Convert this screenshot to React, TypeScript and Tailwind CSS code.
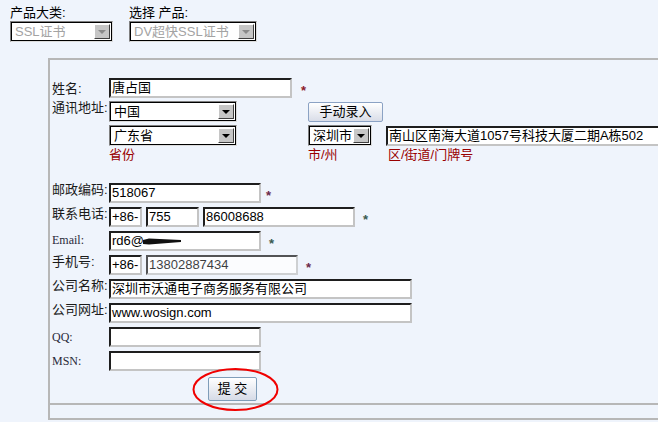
import type { ReactNode } from 'react'

const INPUT =
  'h-[20px] bg-white border-2 border-t-[#1e1e1e] border-l-[#1e1e1e] border-r-[#c4c4c4] border-b-[#c4c4c4] flex items-center pl-[1px] text-[13px] leading-[16px] text-black overflow-hidden whitespace-nowrap'

function Field({ className, children }: { className: string; children?: ReactNode }) {
  return <div className={`${INPUT} ${className}`}>{children}</div>
}

function Select({ className, text, disabled }: { className: string; text: string; disabled?: boolean }) {
  return (
    <div className={`h-[21px] border border-t-[#808080] border-l-[#808080] border-r-[#dcdcdc] border-b-[#dcdcdc] ${className}`}>
      <div className="h-full border border-black bg-white flex items-center">
        <span
          className={`flex-1 pl-[3px] text-[13px] leading-[16px] whitespace-nowrap overflow-hidden ${
            disabled ? 'text-[#a3a3a3]' : 'text-black'
          }`}
        >
          {text}
        </span>
        <div className="w-[16px] h-[15px] mr-[1px] bg-[#c6c6c6] border border-t-white border-l-white border-r-[#404040] border-b-[#404040] flex items-center justify-center">
          <div
            className={`w-0 h-0 border-l-[4px] border-r-[4px] border-t-[4px] border-l-transparent border-r-transparent ${
              disabled ? 'border-t-[#8a8a8a]' : 'border-t-black'
            }`}
          />
        </div>
      </div>
    </div>
  )
}

function Star({ className, color }: { className: string; color: string }) {
  return (
    <span className={`self-center font-bold text-[13px] leading-[13px] mt-[4px] ${color} ${className}`}>*</span>
  )
}

function Label({ children, className = '' }: { children: ReactNode; className?: string }) {
  return <div className={`w-[57px] shrink-0 text-[13px] leading-[14px] text-[#1a1a1a] ${className}`}>{children}</div>
}

function SerifLabel({ children, className = '' }: { children: ReactNode; className?: string }) {
  return (
    <div className={`w-[57px] shrink-0 font-['Liberation_Serif',serif] text-[12px] leading-[14px] text-[#2a2a3a] ${className}`}>
      {children}
    </div>
  )
}

export default function App() {
  return (
    <div className="w-[658px] h-[422px] overflow-hidden bg-[#eff4fc] font-['Liberation_Sans','Noto_Sans_CJK_SC',sans-serif]">
      {/* product pickers */}
      <div className="flex pt-[5px] pl-[10px]">
        <div className="w-[119px]">
          <div className="h-[16px] text-[13px] leading-[16px] text-black">产品大类:</div>
          <Select className="w-[103px]" text="SSL证书" disabled />
        </div>
        <div>
          <div className="h-[16px] text-[13px] leading-[16px] text-black">选择 产品:</div>
          <Select className="w-[128px]" text="DV超快SSL证书" disabled />
        </div>
      </div>

      {/* form panel */}
      <div className="mt-[16px] ml-[48px] w-[700px] border-2 border-[#b7b7b7]">
        <div className="pl-[2px] pt-[18px] pb-[3px] border-b-2 border-[#b7b7b7]">
          <div className="flex h-[20px]">
            <Label className="pt-[4px]">姓名:</Label>
            <Field className="w-[183px]">唐占国</Field>
            <Star className="ml-[9px]" color="text-[#8b1a2a]" />
          </div>

          <div className="flex mt-[3px]">
            <Label>通讯地址:</Label>
            <div className="grid grid-cols-[199px_78px_320px] gap-y-[3px]">
              <Select className="w-[128px]" text="中国" />
              <button className="w-[75px] h-[20px] mt-[1px] border border-[#8ba2c4] rounded-[2px] bg-linear-to-b from-white to-[#d9dde8] text-[13px] leading-[16px] text-black">
                手动录入
              </button>
              <div />
              <Select className="w-[128px]" text="广东省" />
              <Select className="w-[64px]" text="深圳市" />
              <Field className="w-[320px] h-[19px] mt-[1px]">南山区南海大道1057号科技大厦二期A栋502</Field>
              <div className="text-[13px] leading-[14px] text-[#990000] -mt-[1px]">省份</div>
              <div className="text-[13px] leading-[14px] text-[#990000] -mt-[1px]">市/州</div>
              <div className="pl-[2px] text-[13px] leading-[14px] text-[#990000] -mt-[1px]">区/街道/门牌号</div>
            </div>
          </div>

          <div className="flex h-[20px] mt-[21px]">
            <Label>邮政编码:</Label>
            <Field className="w-[152px]">518067</Field>
            <Star className="ml-[5px]" color="text-[#6a2a4a]" />
          </div>

          <div className="flex h-[20px] mt-[4px]">
            <Label>联系电话:</Label>
            <div className="flex gap-[4px]">
              <Field className="w-[33px]">+86-</Field>
              <Field className="w-[53px]">755</Field>
              <Field className="w-[152px]">86008688</Field>
            </div>
            <Star className="ml-[8px]" color="text-[#3a5a50]" />
          </div>

          <div className="flex h-[20px] mt-[4px]">
            <SerifLabel className="pt-[2px]">Email:</SerifLabel>
            <Field className="w-[152px]">
              rd6@
              <svg width="38" height="9" viewBox="0 0 38 9" className="-ml-[1px]">
                <path d="M0 3 L6 1.5 L38 3 L38 5 L6 7.5 L0 7 Z" fill="#111" />
              </svg>
            </Field>
            <Star className="ml-[8px]" color="text-[#3a5a50]" />
          </div>

          <div className="flex h-[20px] mt-[4px]">
            <Label>手机号:</Label>
            <div className="flex gap-[4px]">
              <Field className="w-[33px]">+86-</Field>
              <Field className="w-[152px] text-[#2a2a9a] opacity-75">13802887434</Field>
            </div>
            <Star className="ml-[8px]" color="text-[#6a2a4a]" />
          </div>

          <div className="flex h-[20px] mt-[4px]">
            <Label>公司名称:</Label>
            <Field className="w-[303px]">深圳市沃通电子商务服务有限公司</Field>
          </div>

          <div className="flex h-[20px] mt-[4px]">
            <Label>公司网址:</Label>
            <Field className="w-[303px] text-[#141440]">www.wosign.com</Field>
          </div>

          <div className="flex h-[20px] mt-[4px]">
            <SerifLabel className="pt-[3px]">QQ:</SerifLabel>
            <Field className="w-[152px]" />
          </div>

          <div className="flex h-[20px] mt-[4px]">
            <SerifLabel className="pt-[3px]">MSN:</SerifLabel>
            <Field className="w-[152px]" />
          </div>

          <div className="mt-[5px] ml-[156px] relative w-[49px] h-[24px]">
            <button className="w-[49px] h-[24px] border border-[#7f9db9] rounded-[2px] bg-linear-to-b from-white to-[#d6dbe7] text-[13px] leading-[16px] text-black">
              提 交
            </button>
            {/* hand-drawn highlight ring */}
            <svg width="88" height="44" viewBox="0 0 88 44" className="absolute left-[-16px] top-[-8px] pointer-events-none">
              <ellipse cx="43.5" cy="21.5" rx="42" ry="20.5" fill="none" stroke="#f00000" strokeWidth="2" />
            </svg>
          </div>
        </div>
        <div className="h-[13px]" />
      </div>
    </div>
  )
}
